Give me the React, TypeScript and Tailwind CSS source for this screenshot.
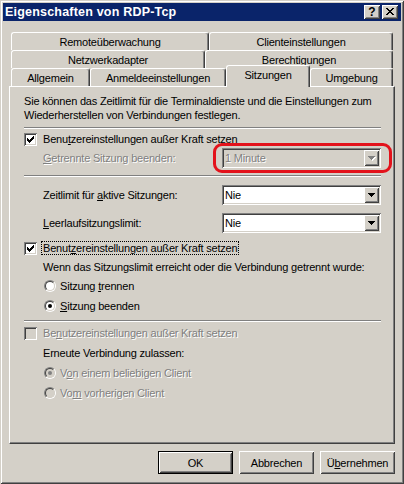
import type { ReactNode } from 'react'

const sunken = 'shadow-[inset_1px_1px_#808080,inset_-1px_-1px_#ffffff,inset_2px_2px_#404040,inset_-2px_-2px_#d4d0c8]'
const raised = 'shadow-[inset_1px_1px_#ffffff,inset_-1px_-1px_#404040,inset_2px_2px_#d4d0c8,inset_-2px_-2px_#808080]'
const grayText = 'text-[#808080] [text-shadow:1px_1px_0_#ffffff]'

// pixel glyphs, '#' = filled
function Pixels({ rows, color, shadow }: { rows: string[]; color: string; shadow?: boolean }) {
  const w = rows[0].length
  const h = rows.length
  const rects = (c: string, off: number) =>
    rows.flatMap((r, y) =>
      r.split('').map((ch, x) =>
        ch === '#' ? <rect key={`${off}-${x}-${y}`} x={x + off} y={y + off} width="1" height="1" fill={c} /> : null
      )
    )
  return (
    <svg width={w + 1} height={h + 1} viewBox={`0 0 ${w + 1} ${h + 1}`} shapeRendering="crispEdges">
      {shadow && rects('#ffffff', 1)}
      {rects(color, 0)}
    </svg>
  )
}

const CHECK = ['......#', '.....##', '#...###', '##.###.', '#####..', '.###...', '..#....']
const CLOSE = ['##....##', '.##..##.', '..####..', '...##...', '..####..', '.##..##.', '##....##']
const ARROW = ['#######', '.#####.', '..###..', '...#...']

function Sep({ className = '' }: { className?: string }) {
  return <div className={`h-[2px] border-t border-t-[#808080] border-b border-b-white ${className}`} />
}

function CheckBox({ checked, disabled }: { checked?: boolean; disabled?: boolean }) {
  return (
    <div className={`w-[13px] h-[13px] shrink-0 flex items-center justify-center pl-[1px] pt-[1px] ${sunken} ${disabled ? 'bg-[#d4d0c8]' : 'bg-white'}`}>
      {checked && <Pixels rows={CHECK} color="#000000" />}
    </div>
  )
}

function CheckRow({ label, checked, disabled, focus, className = '' }: { label: ReactNode; checked?: boolean; disabled?: boolean; focus?: boolean; className?: string }) {
  return (
    <div className={`flex items-center h-[16px] gap-[4px] ${className}`}>
      <CheckBox checked={checked} disabled={disabled} />
      <span className={`px-[1px] leading-[12px] border border-dotted ${focus ? 'border-black' : 'border-transparent'} ${disabled ? grayText : ''}`}>
        {label}
      </span>
    </div>
  )
}

function Radio({ label, checked, disabled, className = '' }: { label: ReactNode; checked?: boolean; disabled?: boolean; className?: string }) {
  return (
    <div className={`flex items-center h-[16px] ml-[20px] gap-[4px] ${className}`}>
      <div className="w-[12px] h-[12px] shrink-0 rounded-full border border-t-[#808080] border-l-[#808080] border-r-white border-b-white">
        <div className={`w-full h-full rounded-full border border-t-[#404040] border-l-[#404040] border-r-[#d4d0c8] border-b-[#d4d0c8] flex items-center justify-center ${disabled ? 'bg-[#d4d0c8]' : 'bg-white'}`}>
          {checked && <div className={`w-[4px] h-[4px] rounded-full ${disabled ? 'bg-[#808080]' : 'bg-black'}`} />}
        </div>
      </div>
      <span className={disabled ? grayText : ''}>{label}</span>
    </div>
  )
}

function Combo({ value, disabled }: { value: string; disabled?: boolean }) {
  return (
    <div className={`w-[159px] h-[20px] shrink-0 flex p-[2px] ${sunken} ${disabled ? 'bg-[#d4d0c8]' : 'bg-white'}`}>
      <span className={`flex-1 pl-[1px] leading-[16px] ${disabled ? grayText : ''}`}>{value}</span>
      <div className={`w-[15px] h-full flex items-center justify-center pl-[1px] bg-[#d4d0c8] ${raised}`}>
        <Pixels rows={ARROW} color={disabled ? '#808080' : '#000000'} shadow={disabled} />
      </div>
    </div>
  )
}

function ComboRow({ label, value, disabled, className = '', children }: { label: ReactNode; value: string; disabled?: boolean; className?: string; children?: ReactNode }) {
  return (
    <div className={`flex items-center h-[20px] ml-[19px] ${className}`}>
      <span className={`flex-1 ${disabled ? grayText : ''}`}>{label}</span>
      <div className="relative">
        <Combo value={value} disabled={disabled} />
        {children}
      </div>
    </div>
  )
}

function Tab({ label, w, selected }: { label: string; w: string; selected?: boolean }) {
  if (selected) {
    return (
      <div className={`${w} relative z-10 -mt-[3px] h-[22px] bg-[#d4d0c8] border-l border-t border-white border-r border-r-[#404040] rounded-t-[3px] shadow-[inset_-1px_0_#808080] flex justify-center pt-[2px]`}>
        {label}
      </div>
    )
  }
  return (
    <div className={`${w} h-full border-l border-t border-white border-r border-r-[#404040] rounded-t-[3px] shadow-[inset_-1px_0_#808080] flex items-center justify-center`}>
      {label}
    </div>
  )
}

function Button({ children, def }: { children: ReactNode; def?: boolean }) {
  return (
    <div className={`w-[75px] h-[23px] ${def ? 'border border-black' : ''}`}>
      <div className={`w-full h-full flex items-center justify-center ${raised}`}>{children}</div>
    </div>
  )
}

export default function App() {
  return (
    <div className="w-[404px] h-[484px] bg-[#d4d0c8] p-[3px] flex flex-col text-[11px] leading-[14px] tracking-[-0.2px] text-black [font-family:Liberation_Sans,Arial,sans-serif] shadow-[inset_1px_1px_#d4d0c8,inset_-1px_-1px_#404040,inset_2px_2px_#ffffff,inset_-2px_-2px_#808080]">
      {/* title bar */}
      <div className="h-[18px] bg-[#0a246a] flex items-center pl-[2px] pr-[3px]">
        <span className="flex-1 text-white font-bold text-[12.5px] tracking-[0.2px]">Eigenschaften von RDP-Tcp</span>
        <div className="flex gap-[2px]">
          <div className={`w-[16px] h-[14px] bg-[#d4d0c8] flex items-center justify-center font-bold text-[12px] leading-[12px] tracking-normal ${raised}`}>?</div>
          <div className={`w-[16px] h-[14px] bg-[#d4d0c8] flex items-center justify-center pl-[1px] ${raised}`}>
            <Pixels rows={CLOSE} color="#000000" />
          </div>
        </div>
      </div>

      <div className="flex-1 flex flex-col px-[6px] pt-[11px]">
        {/* tabs */}
        <div className="flex flex-col px-[2px]">
          <div className="flex h-[18px]">
            <Tab w="w-[198px]" label="Remoteüberwachung" />
            <Tab w="w-[184px]" label="Clienteinstellungen" />
          </div>
          <div className="flex h-[18px]">
            <Tab w="w-[194px]" label="Netzwerkadapter" />
            <Tab w="w-[188px]" label="Berechtigungen" />
          </div>
          <div className="flex h-[18px]">
            <Tab w="w-[79px]" label="Allgemein" />
            <Tab w="w-[136px]" label="Anmeldeeinstellungen" />
            <Tab w="w-[84px]" label="Sitzungen" selected />
            <Tab w="w-[83px]" label="Umgebung" />
          </div>
        </div>

        {/* panel */}
        <div className="h-[358px] border border-t-white border-l-white border-r-[#404040] border-b-[#404040] shadow-[inset_-1px_-1px_#808080] pl-[14px] pr-[13px] pt-[7px] flex flex-col">
          <p>
            Sie können das Zeitlimit für die Terminaldienste und die Einstellungen zum<br />
            Wiederherstellen von Verbindungen festlegen.
          </p>
          <Sep className="mt-[5px]" />
          <CheckRow className="mt-[2px]" checked label={<>Benu<u className="underline-offset-1">t</u>zereinstellungen außer Kraft setzen</>} />
          <ComboRow className="mt-[1px]" disabled value="1 Minute" label={<><u className="underline-offset-1">G</u>etrennte Sitzung beenden:</>}>
            <div className="absolute -left-[9px] -right-[11px] -top-[5px] -bottom-[5px] border-[3px] border-[#e3121b] rounded-[9px]" />
          </ComboRow>
          <Sep className="mt-[7px]" />
          <ComboRow className="mt-[8px]" value="Nie" label={<>Zeitlimit für <u className="underline-offset-1">a</u>ktive Sitzungen:</>} />
          <ComboRow className="mt-[8px]" value="Nie" label={<><u className="underline-offset-1">L</u>eerlaufsitzungslimit:</>} />
          <CheckRow className="mt-[7px]" checked focus label={<>Benut<u className="underline-offset-1">z</u>ereinstellungen außer Kraft setzen</>} />
          <div className="mt-[4px] ml-[19px]">Wenn das Sitzungslimit erreicht oder die Verbindung getrennt wurde:</div>
          <Radio className="mt-[4px]" label={<>Sitzung <u className="underline-offset-1">t</u>rennen</>} />
          <Radio className="mt-[4px]" checked label={<><u className="underline-offset-1">S</u>itzung beenden</>} />
          <Sep className="mt-[6px]" />
          <CheckRow className="mt-[3px]" disabled label={<>Be<u className="underline-offset-1">n</u>utzereinstellungen außer Kraft setzen</>} />
          <div className="mt-[5px] ml-[19px]">Erneute Verbindung zulassen:</div>
          <Radio className="mt-[5px]" disabled checked label={<>V<u className="underline-offset-1">o</u>n einem beliebigen Client</>} />
          <Radio className="mt-[4px]" disabled label={<>Vo<u className="underline-offset-1">m</u> vorherigen Client</>} />
        </div>

        {/* buttons */}
        <div className="mt-[7px] flex justify-end gap-[6px]">
          <Button def>OK</Button>
          <Button>Abbrechen</Button>
          <Button><>Ü<u className="underline-offset-1">b</u>ernehmen</></Button>
        </div>
      </div>
    </div>
  )
}
